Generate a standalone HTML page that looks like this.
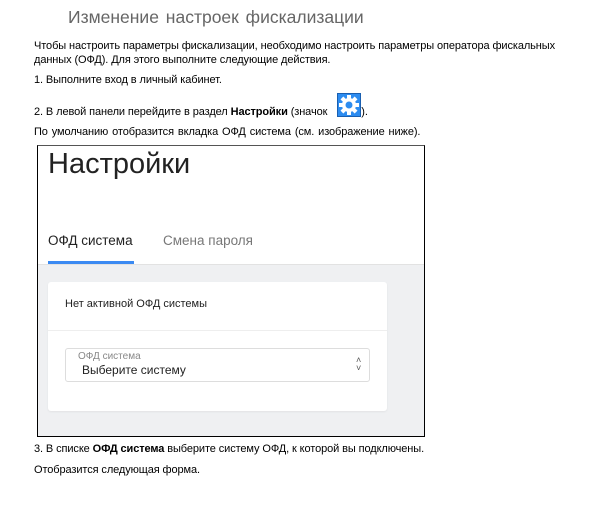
<!DOCTYPE html>
<html><head><meta charset="utf-8"><style>
body{margin:0;width:616px;height:523px;background:#fff;font-family:"Liberation Sans",sans-serif;position:relative;overflow:hidden}
.a{position:absolute;white-space:nowrap}
.t{font-size:11px;color:#000;letter-spacing:-0.1px;line-height:13px}
</style></head><body>
<div class="a" style="left:68px;top:7px;font-size:17.5px;color:#666;word-spacing:2px">Изменение настроек фискализации</div>
<div class="a t" style="left:34px;top:40px">Чтобы настроить параметры фискализации, необходимо настроить параметры оператора фискальных</div>
<div class="a t" style="left:34px;top:54px">данных (ОФД). Для этого выполните следующие действия.</div>
<div class="a t" style="left:34px;top:74px">1. Выполните вход в личный кабинет.</div>
<div class="a t" style="left:34px;top:105px">2. В левой панели перейдите в раздел <b>Настройки</b> (значок <span style="display:inline-block;width:31px;height:10px;vertical-align:0"></span>).</div>
<div class="a" style="left:337px;top:93px;width:24px;height:24px;background:#2d8cf0;border:1px solid #1a5fb0;box-sizing:border-box">
<svg width="22" height="22" viewBox="0 0 22 22"><g fill="#fff"><circle cx="11" cy="11" r="7"/><rect x="9" y="1" width="4" height="20"/><rect x="1" y="9" width="20" height="4"/><rect x="9" y="1" width="4" height="20" transform="rotate(45 11 11)"/><rect x="9" y="1" width="4" height="20" transform="rotate(-45 11 11)"/></g><circle cx="11" cy="11" r="3.5" fill="#2d8cf0"/></svg></div>
<div class="a t" style="left:34px;top:126px;word-spacing:1px">По умолчанию отобразится вкладка ОФД система (см. изображение ниже).</div>
<div class="a" style="left:37px;top:145px;width:386px;height:290px;border:1px solid #000;border-top-color:#555;overflow:hidden;background:#fff">
 <div class="a" style="left:10px;top:2px;font-size:29px;color:#222">Настройки</div>
 <div class="a" style="left:10px;top:87px;font-size:13.5px;color:#222">ОФД система</div>
 <div class="a" style="left:125px;top:87px;font-size:13.5px;color:#777">Смена пароля</div>
 <div class="a" style="left:0;top:118px;width:386px;height:172px;background:#eff0f2;border-top:1px solid #e2e2e2"></div>
 <div class="a" style="left:10px;top:115px;width:86px;height:3px;background:#3b8af2"></div>
 <div class="a" style="left:10px;top:136px;width:339px;height:129px;background:#fff;border-radius:3px;box-shadow:0 1px 2px rgba(0,0,0,.06)">
  <div class="a" style="left:17px;top:16px;font-size:11px;color:#222">Нет активной ОФД системы</div>
  <div class="a" style="left:0;top:48px;width:339px;height:1px;background:#eee"></div>
  <div class="a" style="left:17px;top:66px;width:303px;height:32px;border:1px solid #ddd;border-radius:3px">
   <div class="a" style="left:12px;top:2px;font-size:10px;color:#888">ОФД система</div>
   <div class="a" style="left:16px;top:14px;font-size:12px;color:#222">Выберите систему</div>
   <div class="a" style="left:290px;top:7px;font-size:9px;color:#555;line-height:8px">˄<br>˅</div>
  </div>
 </div>
</div>
<div class="a t" style="left:34px;top:443px">3. В списке <b>ОФД система</b> выберите систему ОФД, к которой вы подключены.</div>
<div class="a t" style="left:34px;top:464px">Отобразится следующая форма.</div>
</body></html>
